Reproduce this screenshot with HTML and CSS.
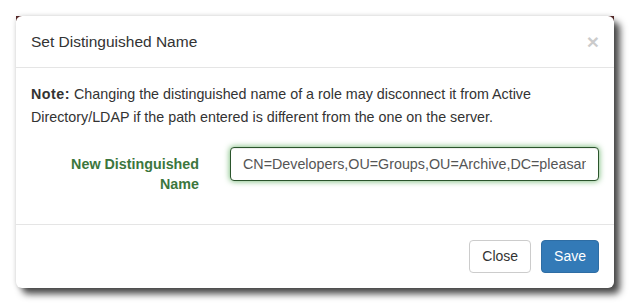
FILE: index.html
```html
<!DOCTYPE html>
<html>
<head>
    <meta name="viewport" content="width=device-width, initial-scale=1">
    <link rel="stylesheet" href="styles.css">
</head>
<body>

<div class="stage">
    <div class="modal">
        <div class="modal-header">
            <h4 class="modal-title">Set Distinguished Name</h4>
            <button type="button" class="close">&times;</button>
        </div>

        <div class="modal-body">
            <p class="note"><b>Note:</b> Changing the distinguished name of a role may disconnect it from Active Directory/LDAP if the path entered is different from the one on the server.</p>

            <div class="form-group has-success">
                <label for="dn" class="control-label">New Distinguished Name</label>
                <input type="text" id="dn" class="form-control" value="CN=Developers,OU=Groups,OU=Archive,DC=pleasantsolutions,DC=local">
            </div>
        </div>

        <div class="modal-footer">
            <button type="button" class="btn btn-default">Close</button>
            <button type="button" class="btn btn-primary">Save</button>
        </div>
    </div>
</div>

</body>
</html>
```

FILE: styles.css
```css
body {
    margin: 0;
    background-color: #fff;
    font-family: "Liberation Sans", Arial, Helvetica, sans-serif;
    font-size: 14.3px;
    color: #333;
}

.stage {
    position: relative;
    padding: 16px 17px 18px 16px;
}

/* dark corners peeking out behind the rounded top edge */
.stage::before {
    content: "";
    position: absolute;
    top: 16px;
    left: 16px;
    right: 17px;
    height: 5px;
    background-color: #5a2a2a;
}

.modal {
    position: relative;
    background-color: #fff;
    border-radius: 6px;
    box-shadow: 0 0 5px rgba(0, 0, 0, 0.18), 6px 6px 7px rgba(0, 0, 0, 0.7);
}

.modal-header {
    display: flex;
    align-items: center;
    justify-content: space-between;
    padding: 15px;
    border-bottom: 1px solid #e5e5e5;
}

.modal-title {
    margin: 0;
    font-size: 15.5px;
    font-weight: normal;
    line-height: 21px;
}

.close {
    padding: 0;
    border: none;
    background: none;
    font-family: inherit;
    font-size: 21px;
    font-weight: bold;
    line-height: 1;
    color: #000;
    opacity: 0.2;
    cursor: pointer;
}

.modal-body {
    padding: 15px;
}

.note {
    margin: 0 0 19px;
    line-height: 22.5px;
}

.note b {
    letter-spacing: 0.5px;
}

.form-group {
    display: grid;
    grid-template-columns: 168px 1fr;
    column-gap: 31px;
    align-items: start;
    margin-bottom: 15px;
}

.control-label {
    padding: 7px 0 0 30px;
    text-align: right;
    font-weight: bold;
    line-height: 20px;
}

.has-success .control-label {
    color: #3c763d;
}

.form-control {
    box-sizing: border-box;
    width: 100%;
    height: 34px;
    padding: 6px 12px;
    font-family: inherit;
    font-size: 14.3px;
    color: #555;
    background-color: #fff;
    border: 1px solid #ccc;
    border-radius: 4px;
    outline: none;
}

.has-success .form-control {
    border-color: #2b542c;
    box-shadow: inset 0 1px 1px rgba(0, 0, 0, 0.075), 0 0 6px #67b168;
}

.modal-footer {
    display: flex;
    justify-content: flex-end;
    gap: 10px;
    padding: 15px;
    border-top: 1px solid #e5e5e5;
}

.btn {
    padding: 6px 12px;
    font-family: inherit;
    font-size: 14px;
    line-height: 19px;
    border: 1px solid transparent;
    border-radius: 4px;
    cursor: pointer;
}

.btn-default {
    color: #333;
    background-color: #fff;
    border-color: #ccc;
}

.btn-primary {
    color: #fff;
    background-color: #337ab7;
    border-color: #2e6da4;
}
```
